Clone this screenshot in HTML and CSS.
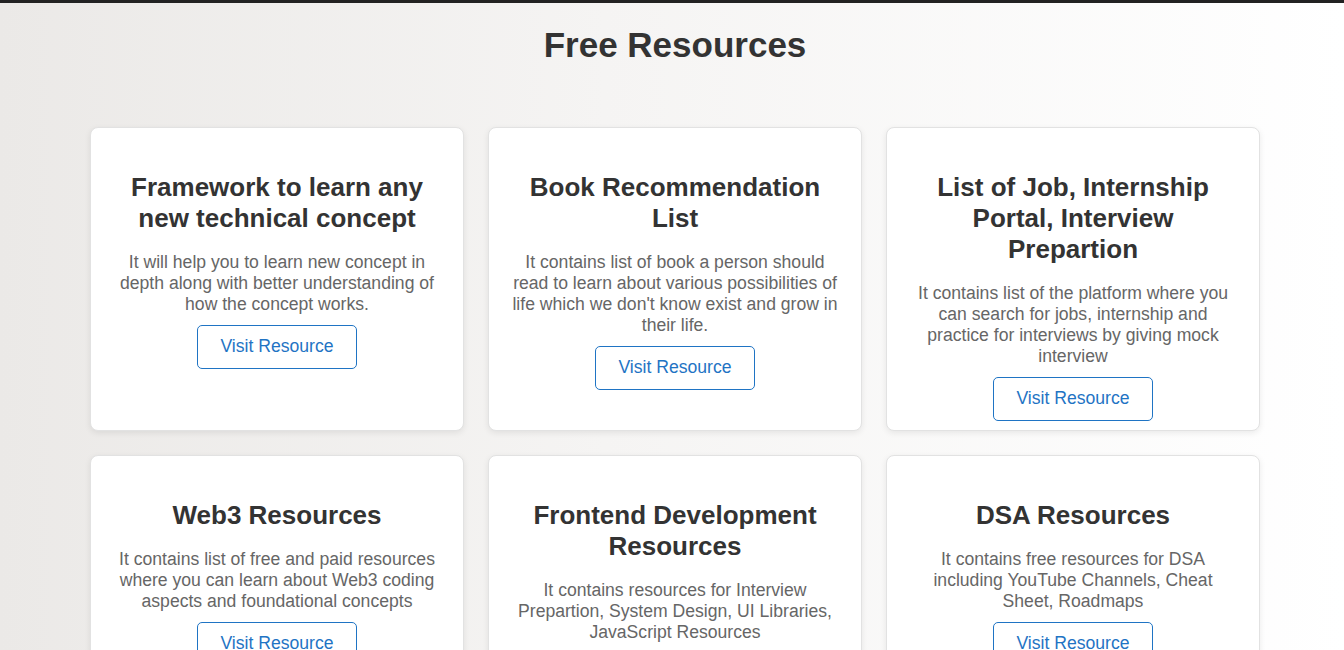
FILE: index.html
```html
<!DOCTYPE html>
<html lang="en">
<head>
    <meta charset="UTF-8">
    <meta name="viewport" content="width=device-width, initial-scale=1.0">
    <title>Free Resources</title>
    <link rel="stylesheet" href="styles.css">
</head>
<body>
    <div class="top-bar"></div>

    <section class="resources">
        <h1>Free Resources</h1>

        <div class="resource-grid">
            <div class="resource-card">
                <h3>Framework to learn any new technical concept</h3>
                <p>It will help you to learn new concept in depth along with better understanding of how the concept works.</p>
                <a href="#" class="visit-btn">Visit Resource</a>
            </div>

            <div class="resource-card">
                <h3>Book Recommendation List</h3>
                <p>It contains list of book a person should read to learn about various possibilities of life which we don't know exist and grow in their life.</p>
                <a href="#" class="visit-btn">Visit Resource</a>
            </div>

            <div class="resource-card">
                <h3>List of Job, Internship Portal, Interview Prepartion</h3>
                <p>It contains list of the platform where you can search for jobs, internship and practice for interviews by giving mock interview</p>
                <a href="#" class="visit-btn">Visit Resource</a>
            </div>

            <div class="resource-card">
                <h3>Web3 Resources</h3>
                <p>It contains list of free and paid resources where you can learn about Web3 coding aspects and foundational concepts</p>
                <a href="#" class="visit-btn">Visit Resource</a>
            </div>

            <div class="resource-card">
                <h3>Frontend Development Resources</h3>
                <p>It contains resources for Interview Prepartion, System Design, UI Libraries, JavaScript Resources</p>
                <a href="#" class="visit-btn">Visit Resource</a>
            </div>

            <div class="resource-card">
                <h3>DSA Resources</h3>
                <p>It contains free resources for DSA including YouTube Channels, Cheat Sheet, Roadmaps</p>
                <a href="#" class="visit-btn">Visit Resource</a>
            </div>
        </div>
    </section>
</body>
</html>
```

FILE: styles.css
```css
html, body {
    margin: 0;
    padding: 0;
}
body {
    font-family: "Liberation Sans", Arial, sans-serif;
    color: #333;
    background: linear-gradient(90deg, #ebe9e7 0%, #f5f4f3 45%, #ffffff 100%);
    min-height: 650px;
}
.top-bar {
    height: 3px;
    background-color: #222;
}
.resources {
    padding: 0 84px 40px 90px;
}
.resources h1 {
    margin: 0;
    padding-top: 22px;
    text-align: center;
    font-size: 35px;
    line-height: 40px;
    color: #333;
}
.resource-grid {
    display: grid;
    grid-template-columns: repeat(3, 1fr);
    gap: 24px;
    margin-top: 62px;
}
.resource-card {
    background: white;
    border: 1px solid #e2e2e2;
    border-radius: 8px;
    box-shadow: 0 2px 6px rgba(0,0,0,0.08);
    padding: 16px 20px 9px;
    text-align: center;
}
.resource-card h3 {
    font-size: 26px;
    line-height: 31px;
    margin: 28px 0 18px;
    color: #333;
}
.resource-card p {
    font-size: 17.6px;
    line-height: 21px;
    margin: 0 0 10px;
    color: #666;
}
.visit-btn {
    display: inline-block;
    padding: 10px 22px 11px;
    font-size: 17.6px;
    line-height: 21px;
    color: #1f74c4;
    border: 1px solid #1f74c4;
    border-radius: 5px;
    text-decoration: none;
}
```
